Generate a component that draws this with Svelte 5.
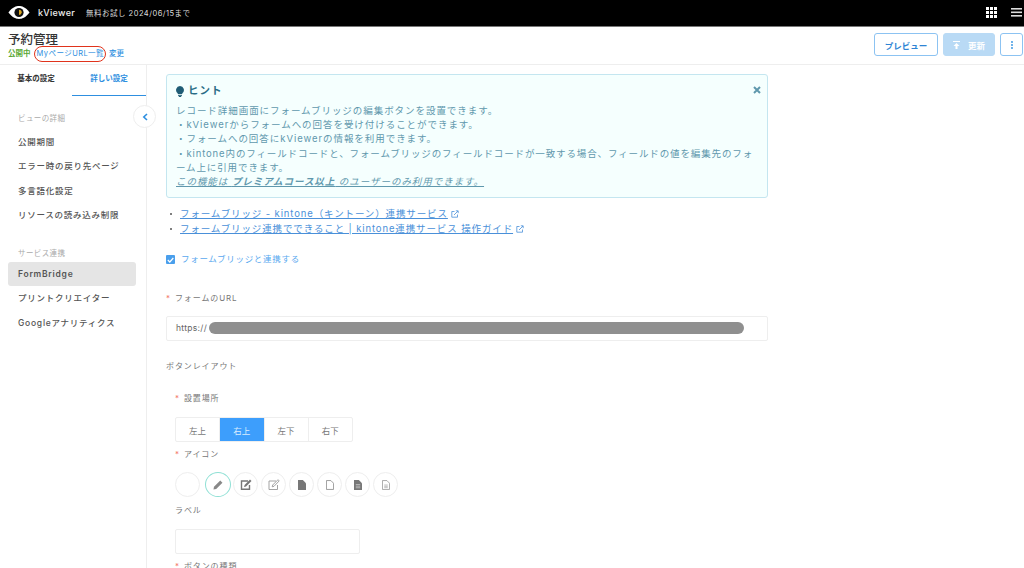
<script>
  const menu1 = ['公開期間', 'エラー時の戻り先ページ', '多言語化設定', 'リソースの読み込み制限']
  const menu2 = ['FormBridge', 'プリントクリエイター', 'Googleアナリティクス']
  const places = ['左上', '右上', '左下', '右下']
</script>

<div class="page">
  <header class="top">
    <svg class="logo" width="22" height="13" viewBox="0 0 24 14">
      <path d="M0.5 7C5 1 9 0 12 0s7 1 11.5 7C19 13 15 14 12 14S5 13 .5 7z" fill="#fff"/>
      <circle cx="12" cy="7" r="5" fill="#111"/>
      <path d="M12 4a3 3 0 0 1 3 3 3 3 0 0 1-3 2.6z" fill="#d9a520"/>
    </svg>
    <span class="brand">kViewer</span>
    <span class="trial">無料お試し 2024/06/15まで</span>
    <span class="spacer"></span>
    <svg width="11" height="11" viewBox="0 0 11 11" fill="#fff">
      <rect width="3" height="3"/><rect x="4" width="3" height="3"/><rect x="8" width="3" height="3"/>
      <rect y="4" width="3" height="3"/><rect x="4" y="4" width="3" height="3"/><rect x="8" y="4" width="3" height="3"/>
      <rect y="8" width="3" height="3"/><rect x="4" y="8" width="3" height="3"/><rect x="8" y="8" width="3" height="3"/>
    </svg>
    <svg width="11" height="9" viewBox="0 0 11 9" fill="#ddd">
      <rect width="11" height="1.6"/><rect y="3.5" width="11" height="1.6"/><rect y="7" width="11" height="1.6"/>
    </svg>
  </header>

  <section class="head">
    <div>
      <h1>予約管理</h1>
      <div class="sub">
        <span class="pub">公開中</span>
        <span class="mypage">MyページURL一覧<i class="ring"></i></span>
        <span class="change">変更</span>
      </div>
    </div>
    <div class="actions">
      <button class="btn outline">プレビュー</button>
      <button class="btn save">
        <svg width="7" height="8" viewBox="0 0 7 8" fill="#fff"><rect width="7" height="1"/><path d="M3.5 2 6.5 5H4.5V8h-2V5H.5z"/></svg>
        <span>更新</span>
      </button>
      <button class="btn more">
        <svg width="2" height="8" viewBox="0 0 2 8" fill="#2e8fe0"><circle cx="1" cy="1" r=".9"/><circle cx="1" cy="4" r=".9"/><circle cx="1" cy="7" r=".9"/></svg>
      </button>
    </div>
  </section>

  <div class="body">
    <aside class="side">
      <div class="tabs">
        <div class="tab">基本の設定</div>
        <div class="tab on">詳しい設定</div>
      </div>
      <div class="collapse">
        <svg width="6" height="8" viewBox="0 0 6 8" fill="none" stroke="#2e8fe0" stroke-width="1.6"><path d="M5 1 1.8 4 5 7"/></svg>
      </div>
      <div class="cap first">ビューの詳細</div>
      {#each menu1 as m}
        <div class="item">{m}</div>
      {/each}
      <div class="cap second">サービス連携</div>
      {#each menu2 as m, i}
        <div class="item" class:active={i === 0}>{m}</div>
      {/each}
    </aside>

    <main class="main">
      <div class="hint">
        <svg class="close" width="8" height="8" viewBox="0 0 8 8" stroke="#5f98ad" stroke-width="2"><path d="M1 1l6 6M7 1 1 7"/></svg>
        <div class="hint-title">
          <svg width="8" height="11" viewBox="0 0 8 11" fill="#1f5c75"><path d="M4 0a4 4 0 0 1 2.3 7.2V8H1.700V7.200A4 4 0 0 1 4 0z"/><rect x="2" y="8.800" width="4" height="1"/><rect x="2.800" y="10" width="2.400" height="1"/></svg>
          ヒント
        </div>
        <p>レコード詳細画面にフォームブリッジの編集ボタンを設置できます。</p>
        <p>・kViewerからフォームへの回答を受け付けることができます。</p>
        <p>・フォームへの回答にkViewerの情報を利用できます。</p>
        <p class="long">・kintone内のフィールドコードと、フォームブリッジのフィールドコードが一致する場合、フィールドの値を編集先のフォーム上に引用できます。</p>
        <p class="premium">この機能は <b>プレミアムコース以上</b> のユーザーのみ利用できます。</p>
      </div>

      <ul class="links">
        <li><span>フォームブリッジ - kintone（キントーン）連携サービス</span>{@render ext()}</li>
        <li><span>フォームブリッジ連携でできること | kintone連携サービス 操作ガイド</span>{@render ext()}</li>
      </ul>

      <div class="check">
        <span class="box">
          <svg width="7" height="6" viewBox="0 0 7 6" fill="none" stroke="#fff" stroke-width="1.200"><path d="M.8 3 2.800 5 6.300 1"/></svg>
        </span>
        フォームブリッジと連携する
      </div>

      <div class="label url-label"><em>*</em>フォームのURL</div>
      <div class="url">https://<i class="mask"></i></div>

      <div class="label layout-label">ボタンレイアウト</div>

      <div class="group">
        <div class="label place-label"><em>*</em>設置場所</div>
        <div class="seg">
          {#each places as p, i}
            <span class:sel={i === 1}>{p}</span>
          {/each}
        </div>

        <div class="label icon-label"><em>*</em>アイコン</div>
        <div class="icons">
          <span class="ic"></span>
          <span class="ic picked">
            <svg width="10" height="10" viewBox="0 0 11 11" fill="#888"><path d="M8 .6 10.400 3 3.500 9.900.5 10.500 1.100 7.500z"/></svg>
          </span>
          <span class="ic">
            <svg width="12" height="11" viewBox="0 0 12 11"><path d="M8 2H1.500v8.300h8V6" fill="none" stroke="#777" stroke-width="1.400"/><path d="M10 .4l1.500 1.500L6 7.400 4 8l.6-2z" fill="#777"/></svg>
          </span>
          <span class="ic">
            <svg width="12" height="11" viewBox="0 0 12 11" fill="none" stroke="#999" stroke-width=".9"><path d="M8 2H1v8.500h8.500V6"/><path d="M10 .7l1.200 1.200L6 7.300 4.200 7.800l.5-1.800z"/></svg>
          </span>
          <span class="ic">
            <svg width="8" height="10" viewBox="0 0 9 11" fill="#777"><path d="M0 0h5.500L9 3.500V11H0z"/></svg>
          </span>
          <span class="ic">
            <svg width="8" height="10" viewBox="0 0 9 11" fill="none" stroke="#888" stroke-width=".9"><path d="M.5.5h5L8.500 3.500v7H.5z"/></svg>
          </span>
          <span class="ic">
            <svg width="8" height="10" viewBox="0 0 9 11"><path d="M0 0h5.500L9 3.500V11H0z" fill="#777"/><path d="M2 5h5M2 6.800h5M2 8.600h5" stroke="#ddd" stroke-width=".7"/></svg>
          </span>
          <span class="ic">
            <svg width="8" height="10" viewBox="0 0 9 11" fill="none" stroke="#888" stroke-width=".8"><path d="M.5.5h5L8.500 3.500v7H.5z"/><path d="M2.500 5.500h4M2.500 7h4M2.500 8.500h4" stroke-width=".6"/></svg>
          </span>
        </div>

        <div class="label name-label">ラベル</div>
        <div class="name-input"></div>
        <div class="label kind-label"><em>*</em>ボタンの種類</div>
      </div>
    </main>
  </div>
</div>

{#snippet ext()}
  <svg class="ext" width="8" height="8" viewBox="0 0 8 8" fill="none" stroke="#4a90d9" stroke-width=".8"><path d="M3.500 1.500H.8v5.700h5.700V4.500"/><path d="M3 5 7 1M4.800 .8H7.200V3.200"/></svg>
{/snippet}

<style>
  :global(body) {
    margin: 0;
    background: #fff;
  }
  * {
    box-sizing: border-box;
  }
  .page {
    width: 1024px;
    height: 568px;
    overflow: hidden;
    display: flex;
    flex-direction: column;
    font-family: Inter, "Noto Sans CJK JP", sans-serif;
    color: #666;
  }
  .top {
    flex: none;
    height: 27px;
    background: #000;
    border-bottom: 1px solid #777;
    display: flex;
    align-items: center;
    padding: 0 2px 1px 8px;
    color: #ddd;
  }
  .logo {
    margin-right: 8px;
  }
  .brand {
    font-size: 9px;
    font-weight: 500;
    color: #eee;
    margin-right: 11px;
    letter-spacing: .3px;
  }
  .trial {
    font-size: 7.500px;
    letter-spacing: .5px;
  }
  .spacer {
    flex: 1;
  }
  .top svg:last-child {
    margin-left: 14px;
  }
  .head {
    flex: none;
    height: 38px;
    border-bottom: 1px solid #eee;
    display: flex;
    justify-content: space-between;
    padding: 6px 1px 0 8px;
  }
  h1 {
    margin: 0;
    font-size: 12.500px;
    line-height: 14px;
    font-weight: 500;
    color: #333;
  }
  .sub {
    display: flex;
    font-size: 7.500px;
    line-height: 11px;
    font-weight: 500;
    margin-top: 1px;
    color: #2e8fe0;
  }
  .pub {
    color: #5aa832;
    margin-right: 6px;
    font-weight: 700;
  }
  .mypage {
    position: relative;
    margin-right: 5px;
    letter-spacing: .45px;
    font-weight: 400;
  }
  .ring {
    position: absolute;
    left: -3px;
    right: -2px;
    top: -2px;
    bottom: -3px;
    border: 1.500px solid #e0331c;
    border-radius: 8px;
  }
  .actions {
    display: flex;
    gap: 5px;
    padding-top: 0;
  }
  .btn {
    height: 23px;
    border-radius: 3px;
    border: 1px solid #8cc3f2;
    background: #fff;
    font: 700 8.500px Inter, "Noto Sans CJK JP", sans-serif;
    color: #2e84d4;
    padding: 0;
  }
  .outline {
    width: 64px;
  }
  .save {
    width: 52px;
    background: #b9daf5;
    border-color: #b9daf5;
    color: #fff;
    display: flex;
    align-items: center;
    justify-content: center;
    gap: 8px;
  }
  .more {
    width: 23px;
    display: flex;
    align-items: center;
    justify-content: center;
  }
  .body {
    flex: 1;
    display: flex;
    min-height: 0;
  }
  .side {
    flex: none;
    width: 147px;
    border-right: 1px solid #eee;
    position: relative;
    padding: 0 10px 0 8px;
  }
  .tabs {
    display: flex;
    height: 31px;
    margin: 0 -10px 0 -8px;
  }
  .tab {
    width: 72px;
    padding-top: 7px;
    text-align: center;
    font-size: 7.500px;
    font-weight: 700;
    color: #333;
  }
  .tab.on {
    width: 74px;
    color: #2e8fe0;
    border-bottom: 1px solid #2e8fe0;
  }
  .collapse {
    position: absolute;
    right: -10px;
    top: 40px;
    width: 23px;
    height: 23px;
    border: 1px solid #eee;
    border-radius: 50%;
    background: #fff;
    display: flex;
    align-items: center;
    justify-content: center;
  }
  .cap {
    font-size: 7.500px;
    color: #aaa;
    padding-left: 10px;
    line-height: 11px;
    letter-spacing: .4px;
  }
  .cap.first {
    margin-top: 17px;
    margin-bottom: 5.500px;
  }
  .cap.second {
    margin-top: 20px;
    margin-bottom: 3px;
  }
  .item {
    height: 24.500px;
    line-height: 24.500px;
    padding-left: 10px;
    font-size: 8.500px;
    letter-spacing: .75px;
    color: #555;
    border-radius: 3px;
    font-weight: 500;
  }
  .item.active {
    background: #e5e5e5;
    font-weight: 600;
  }
  .main {
    flex: 1;
    padding: 9px 0 0 19px;
    min-width: 0;
  }
  .hint {
    position: relative;
    width: 602px;
    height: 124px;
    border: 1px solid #c4e6f0;
    border-radius: 3px;
    background: #f5fffe;
    padding: 9px 10px 9px 9px;
    color: #5f98ad;
    font-size: 9.500px;
    line-height: 14.200px;
    letter-spacing: .95px;
  }
  .close {
    position: absolute;
    right: 6px;
    top: 11px;
  }
  .hint-title {
    display: flex;
    align-items: center;
    gap: 4px;
    color: #2a6d86;
    font-weight: 700;
    font-size: 10.500px;
    height: 14px;
    margin-bottom: 6px;
  }
  p {
    margin: 0;
  }
  .long {
    letter-spacing: .88px;
  }
  .premium {
    font-style: italic;
    text-decoration: underline;
  }
  .links {
    list-style: none;
    margin: 8px 0 0;
    padding: 0;
    font-size: 9.500px;
    line-height: 15px;
    letter-spacing: .88px;
    color: #4a90d9;
  }
  .links li {
    padding-left: 14px;
    position: relative;
    display: flex;
    align-items: center;
    gap: 3px;
  }
  .links li::before {
    content: "";
    position: absolute;
    left: 4px;
    top: 7px;
    width: 2px;
    height: 2px;
    border-radius: 50%;
    background: #555;
  }
  .links span {
    text-decoration: underline;
  }
  .check {
    display: flex;
    align-items: center;
    gap: 6px;
    margin-top: 17px;
    font-size: 8.500px;
    letter-spacing: .7px;
    line-height: 13px;
    color: #5aa9ef;
  }
  .box {
    width: 9px;
    height: 9px;
    background: #4a9fec;
    border-radius: 1px;
    display: flex;
    align-items: center;
    justify-content: center;
  }
  .label {
    font-size: 8px;
    letter-spacing: .9px;
    line-height: 12px;
    color: #777;
  }
  .label em {
    font-style: normal;
    color: #f4776a;
    margin-right: 4px;
  }
  .url-label {
    margin-top: 26px;
  }
  .url {
    position: relative;
    width: 602px;
    height: 25px;
    margin-top: 12px;
    border: 1px solid #eee;
    border-radius: 2px;
    font-size: 8.500px;
    line-height: 23px;
    padding-left: 9px;
    letter-spacing: .3px;
    color: #666;
  }
  .mask {
    position: absolute;
    left: 42px;
    right: 23px;
    top: 5px;
    height: 12px;
    border-radius: 6px;
    background: #8f8f8f;
  }
  .layout-label {
    margin-top: 19px;
  }
  .group {
    padding-left: 9px;
  }
  .place-label {
    margin-top: 20px;
  }
  .seg {
    display: flex;
    width: 178px;
    height: 25px;
    margin-top: 13px;
    border: 1px solid #eee;
    border-radius: 2px;
    font-size: 8.500px;
    color: #777;
  }
  .seg span {
    flex: 1;
    display: flex;
    align-items: center;
    justify-content: center;
    border-left: 1px solid #eee;
  }
  .seg span:first-child {
    border-left: 0;
  }
  .seg .sel {
    background: #3d9efc;
    color: #d8ecff;
  }
  .icon-label {
    margin-top: 6px;
  }
  .icons {
    display: flex;
    gap: 3px;
    margin-top: 12px;
  }
  .ic {
    width: 25px;
    height: 25px;
    border: 1px solid #eee;
    border-radius: 50%;
    display: flex;
    align-items: center;
    justify-content: center;
  }
  .ic.picked {
    width: 26px;
    margin-left: 2px;
    margin-right: -1px;
    border-color: #8fe0d5;
  }
  .name-label {
    margin-top: 7px;
  }
  .name-input {
    width: 185px;
    height: 25px;
    margin-top: 13px;
    border: 1px solid #eee;
    border-radius: 2px;
  }
  .kind-label {
    margin-top: 6px;
  }
</style>
